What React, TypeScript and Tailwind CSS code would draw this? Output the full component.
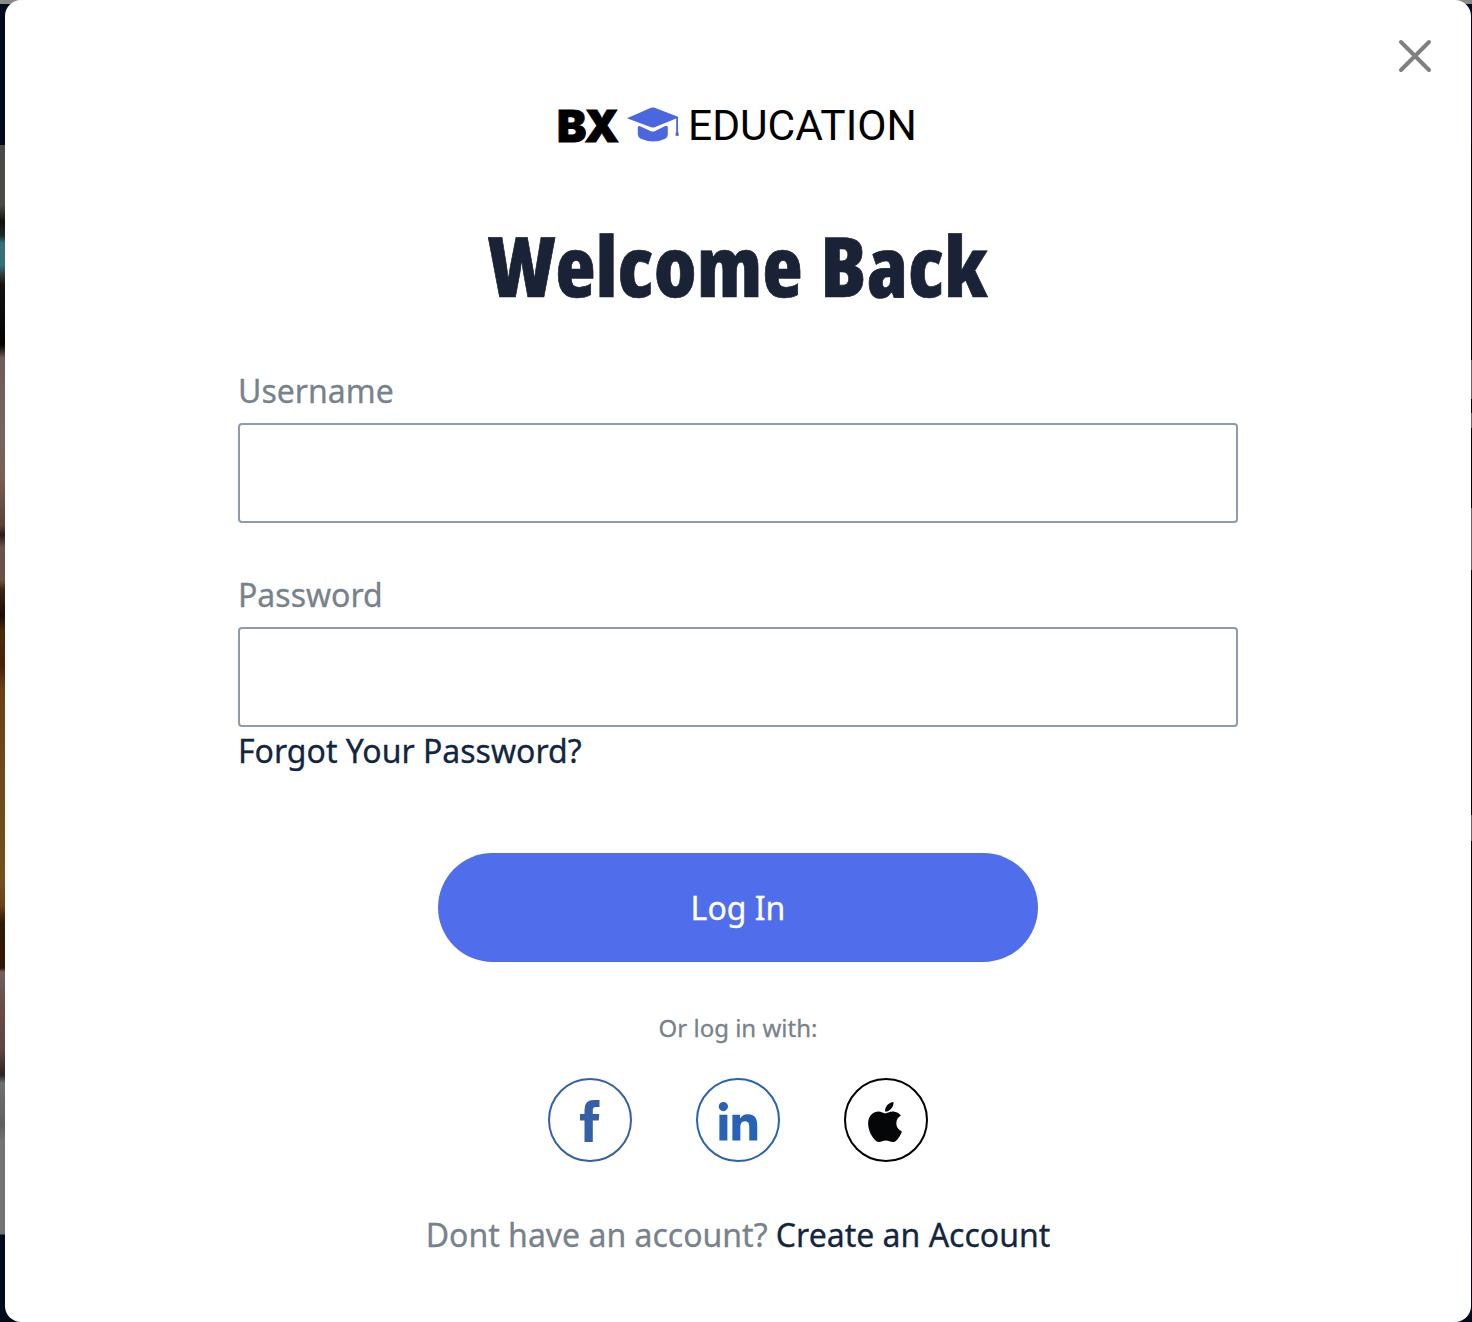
import React from "react";
import { FaLinkedinIn, FaApple } from "react-icons/fa";

function Backdrop() {
  return (
    <div className="absolute inset-0 flex justify-between" aria-hidden="true">
      <div className="h-full w-8 bg-[linear-gradient(180deg,#8a8a8a_4px,#020b1c_4px,#020b1c_145px,#4c4a46_145px,#4c4a46_205px,#12100e_222px,#1f2a2e_236px,#33707a_243px,#33707a_265px,#2d3a3c_275px,#141210_285px,#050302_345px,#6f5d55_358px,#76665e_440px,#7a5c50_480px,#5c4238_525px,#2e1c14_535px,#6a5248_547px,#6a5248_580px,#3c2413_590px,#1c0c05_615px,#4a2a0e_632px,#4a200a_665px,#6b4115_690px,#75501d_880px,#6b4215_905px,#331a08_922px,#331505_968px,#6e625c_972px,#6a4b42_1010px,#5d4540_1050px,#2c2222_1075px,#6f7072_1083px,#5e6060_1125px,#747270_1140px,#747270_1234px,#020b1c_1235px)]" />
      <div className="h-full w-8 bg-[linear-gradient(180deg,#8a8a8a_4px,#020b1c_4px,#020b1c_145px,#000_145px,#000_360px,#666_360px,#666_399px,#000_399px,#000_413px,#666_413px,#666_428px,#000_428px,#000_508px,#666_508px,#666_570px,#000_570px,#000_815px,#666_815px,#666_841px,#000_841px,#000_1234px,#020b1c_1235px)]" />
    </div>
  );
}

function Logo() {
  return (
    <div className="flex h-[50px] w-[362px] items-center">
      <span className="w-[62px] shrink-0 font-['Inter'] text-[44px] leading-[50px] font-black tracking-[-2px] text-black [-webkit-text-stroke-width:1px]">
        BX
      </span>
      <svg width="52" height="36" viewBox="0 0 52 36" className="mt-[-2px] ml-[8px] shrink-0" fill="#4a67df">
        <path d="M0 11.200 24 .8q1.800-.7 3.600 0L51 9.800q1 .5 0 1L27.600 20.200q-1.800.7-3.600 0Z" />
        <path d="M10.800 20.200q.8-1.500 2.200-1L24 24.200q1.800.8 3.600 0L38.800 18.800q2-.3 2 1.500v7.200q0 2.500-2.500 4.200-11.500 5.500-24.500 0-3-1.700-3-4.200Z" />
        <path d="M49.200 10.500h1.800V24.500l1 3.800q-1.800 1.200-3.700 0l.9-3.800Z" />
      </svg>
      <span className="ml-[9px] font-['Roboto'] text-[42.5px] leading-[50px] text-black [-webkit-text-stroke-width:0]">EDUCATION</span>
    </div>
  );
}

function Field({ label, type }: { label: string; type: string }) {
  return (
    <label className="flex flex-col">
      <span className="h-[54px] text-[32px] leading-[44px] text-[#78828c]">{label}</span>
      <input type={type} className="h-[100px] w-full rounded-[4px] border-2 border-[#8f9ba8] px-6 outline-none" />
    </label>
  );
}

function SocialButton({ label, className, children }: { label: string; className: string; children: React.ReactNode }) {
  return (
    <button aria-label={label} className={`flex h-[84px] w-[84px] items-center justify-center rounded-full border-2 ${className}`}>
      {children}
    </button>
  );
}

export default function App() {
  return (
    <div className="relative flex h-[1322px] w-[1472px] overflow-hidden bg-black pr-px pl-[5px] font-['Noto_Sans',sans-serif] [-webkit-text-stroke-width:0.3px]">
      <Backdrop />
      <main className="relative flex w-[1466px] flex-col items-center rounded-[16px] bg-white">
        <button aria-label="Close" className="absolute top-[39px] right-[39px]">
          <svg width="34" height="34" viewBox="0 0 34 34" stroke="#808080" strokeWidth="4" strokeLinecap="round">
            <path d="M3 3 31 31M31 3 3 31" />
          </svg>
        </button>
        <div className="mt-[101px]">
          <Logo />
        </div>
        <h1 className="mt-[64px] h-[100px] font-['Open_Sans'] text-[82.5px] leading-[100px] font-extrabold tracking-[0.4px] whitespace-nowrap text-[#1a2236] [-webkit-text-stroke-width:0.7px] [font-stretch:75%] [word-spacing:3px]">
          Welcome Back
        </h1>
        <form className="mt-[54px] flex w-[1000px] flex-col">
          <Field label="Username" type="text" />
          <div className="mt-[50px]">
            <Field label="Password" type="password" />
          </div>
          <a href="#" className="mt-[2px] text-[32px] leading-[44px] text-[#12263f]">
            Forgot Your Password?
          </a>
          <button type="button" className="mt-[80px] h-[109px] w-[600px] self-center rounded-full bg-[#506eec] text-[32px] text-white">
            Log In
          </button>
        </form>
        <p className="mt-[49px] text-[24px] leading-[33px] text-[#78828c]">Or log in with:</p>
        <div className="mt-[34px] flex gap-16">
          <SocialButton label="Facebook" className="border-[#3560a8] text-[#3560a8]">
            <svg width="20" height="42" viewBox="0 0 20 42" fill="currentColor" className="mt-[2px]">
              <path d="M4.500 42V20.500H0V14h4.500V9.500Q4.500 0 13.500 0h6v7H15.800Q12.800 7 12.800 10v4h6.500l-.6 6.500H12.800V42Z" />
            </svg>
          </SocialButton>
          <SocialButton label="LinkedIn" className="border-[#2762b5] text-[#2762b5]">
            <FaLinkedinIn size={44} className="mt-[8px]" />
          </SocialButton>
          <SocialButton label="Apple" className="border-black text-[#050608]">
            <FaApple size={46} className="mt-[3px] mr-[2px]" />
          </SocialButton>
        </div>
        <p className="mt-[51px] text-[32px] leading-[44px] text-[#78828c]">
          Dont have an account?{" "}
          <a href="#" className="text-[#12263f]">
            Create an Account
          </a>
        </p>
      </main>
    </div>
  );
}
